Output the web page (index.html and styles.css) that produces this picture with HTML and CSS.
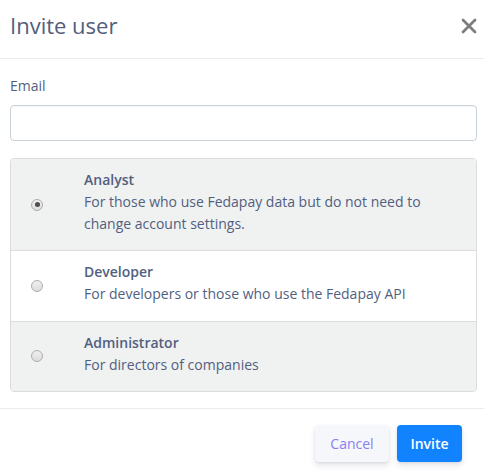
FILE: index.html
```html
<!DOCTYPE html>
<html>
<head>
<meta charset="utf-8">
<link rel="stylesheet" href="styles.css">
</head>
<body>
<div class="modal">
  <div class="modal-header">
    <h2 class="title">Invite user</h2>
    <button class="close" aria-label="Close">
      <svg width="16" height="16" viewBox="0 0 16 16"><path d="M2 2 L14 14 M14 2 L2 14" stroke="#7d7d7d" stroke-width="2.8" stroke-linecap="round"/></svg>
    </button>
  </div>
  <div class="modal-body">
    <label class="label">Email</label>
    <input class="input" type="text">
    <div class="options">
      <div class="option shaded">
        <div class="radio-cell"><span class="radio checked"></span></div>
        <div class="text">
          <div class="opt-title">Analyst</div>
          <div class="opt-desc">For those who use Fedapay data but do not need to change account settings.</div>
        </div>
      </div>
      <div class="option">
        <div class="radio-cell"><span class="radio"></span></div>
        <div class="text">
          <div class="opt-title">Developer</div>
          <div class="opt-desc">For developers or those who use the Fedapay API</div>
        </div>
      </div>
      <div class="option shaded">
        <div class="radio-cell"><span class="radio"></span></div>
        <div class="text">
          <div class="opt-title">Administrator</div>
          <div class="opt-desc">For directors of companies</div>
        </div>
      </div>
    </div>
  </div>
  <div class="modal-footer">
    <button class="btn btn-cancel">Cancel</button>
    <button class="btn btn-invite">Invite</button>
  </div>
</div>
</body>
</html>
```

FILE: styles.css
```css
* { box-sizing: border-box; }
html, body { margin: 0; padding: 0; background: #fff; }
body {
  font-family: "Open Sans", "Liberation Sans", sans-serif;
  color: #525f7f;
  width: 484px;
}
.modal { width: 484px; }
.modal-header {
  display: flex;
  justify-content: space-between;
  align-items: flex-start;
  padding: 9px 7px 15px 10px;
  border-bottom: 1px solid #e9ecef;
  height: 59px;
}
.title {
  margin: 0;
  font-family: "Open Sans", sans-serif;
  font-weight: 400;
  font-size: 22px;
  line-height: 33px;
  color: #525e7c;
}
.close {
  border: 0;
  background: none;
  padding: 0;
  margin-top: 9px;
  width: 16px;
  height: 16px;
  display: block;
}
.close svg { display: block; }
.modal-body {
  padding: 16px 7px 16px 10px;
  border-bottom: 1px solid #e9ecef;
}
.label {
  display: block;
  font-size: 14px;
  line-height: 21px;
  margin-bottom: 9px;
  color: #525f7f;
}
.input {
  display: block;
  width: 100%;
  height: 36px;
  border: 1px solid #cad1d7;
  border-radius: 4px;
  box-shadow: inset 0 1px 1px rgba(0,0,0,0.04);
  margin: 0 0 17px 0;
  outline: none;
  background: #fff;
}
.options {
  border: 1px solid #dcdcdc;
  border-radius: 4px;
  overflow: hidden;
}
.option {
  display: flex;
  align-items: center;
  border-top: 1px solid #dcdcdc;
  background: #fff;
}
.option:first-child { border-top: 0; }
.option.shaded { background: #f0f1f1; }
.radio-cell {
  width: 73px;
  flex: none;
  padding-left: 20px;
  display: flex;
  align-items: center;
}
.radio {
  width: 12px;
  height: 12px;
  border-radius: 50%;
  border: 1px solid #adadad;
  background: linear-gradient(#f0f0f0, #dcdcdc);
  display: flex;
  align-items: center;
  justify-content: center;
}
.radio.checked::after {
  content: "";
  width: 5px;
  height: 5px;
  border-radius: 50%;
  background: #4d4d4d;
}
.text { flex: 1; padding: 10px 20px 16px 0; }
.opt-title {
  font-size: 14px;
  line-height: 22px;
  font-weight: 600;
  color: #525f7f;
}
.opt-desc {
  font-size: 14px;
  line-height: 21.5px;
  color: #525f7f;
}
.modal-footer {
  display: flex;
  justify-content: flex-end;
  gap: 8px;
  padding: 16px 22px 12px 10px;
}
.btn {
  font-family: "Open Sans", sans-serif;
  font-size: 14px;
  font-weight: 600;
  height: 37px;
  border: 0;
  border-radius: 4px;
  padding: 0;
  box-shadow: 0 4px 6px rgba(50,50,93,0.11), 0 1px 3px rgba(0,0,0,0.08);
}
.btn-cancel {
  background: #f6f7fa;
  color: #8b7ef2;
  font-weight: 500;
  width: 74px;
}
.btn-invite {
  background: #1283ff;
  color: #fff;
  width: 65px;
}
```
